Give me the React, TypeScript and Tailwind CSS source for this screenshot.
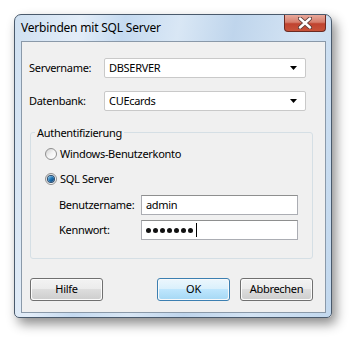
import React from 'react';

const font = { fontFamily: '"Noto Sans", "Open Sans", Arial, sans-serif' };

const ComboBox: React.FC<{ value: string }> = ({ value }) => (
  <div className="w-[202px] h-[20px] shrink-0 flex items-center justify-between bg-white border border-[#c9c9c9] rounded-[2px] pl-[4px] pr-[7px] text-black">
    <span>{value}</span>
    <svg width="8" height="5" viewBox="0 0 8 5">
      <path d="M0 0 L7 0 L3.5 4 Z" fill="#000" />
    </svg>
  </div>
);

const TextBox: React.FC<{ children: React.ReactNode }> = ({ children }) => (
  <div className="w-[157px] h-[20px] shrink-0 flex items-center bg-white border border-[#abadb3] border-t-[#8e8f8f] pl-[4px] text-black">
    {children}
  </div>
);

const Radio: React.FC<{ checked?: boolean; label: string }> = ({ checked, label }) => (
  <div className="h-[20px] flex items-center gap-[2px]">
    <div className="w-[12px] h-[12px] shrink-0 rounded-full border border-[#8f8f8f] bg-gradient-to-br from-[#d0d0d0] via-[#f4f4f4] to-[#ffffff] flex items-center justify-center">
      {checked && (
        <div className="w-[6px] h-[6px] rounded-full bg-gradient-to-br from-[#8fd3f5] via-[#1f74b4] to-[#0c3f72] ring-1 ring-[#2b4c6e]" />
      )}
    </div>
    <span className="ml-[1px]">{label}</span>
  </div>
);

const Button: React.FC<{ label: string; primary?: boolean }> = ({ label, primary }) => (
  <div
    className={
      primary
        ? 'w-[73px] h-[23px] rounded-[3px] border border-[#3c7fb1] p-[1px] bg-white/60'
        : 'w-[73px] h-[23px] rounded-[3px] border border-[#707070] p-[1px] bg-white/70'
    }
  >
    <div
      className={
        primary
          ? 'w-full h-full rounded-[2px] flex items-center justify-center text-black bg-[linear-gradient(#eaf6fd_0%,#d9f0fc_50%,#bee6fd_50%,#a7d9f5_100%)]'
          : 'w-full h-full rounded-[2px] flex items-center justify-center text-black bg-[linear-gradient(#f2f2f2_0%,#ebebeb_50%,#dddddd_50%,#cfcfcf_100%)]'
      }
    >
      {label}
    </div>
  </div>
);

export default function App() {
  return (
    <div className="w-[351px] h-[338px] bg-white pl-[14px] pt-[14px]" style={font}>
      <div className="w-[318px] h-[304px] rounded-t-[7px] rounded-b-[5px] border border-[#4a5a6c] shadow-[4px_6px_12px_rgba(0,0,0,0.45)] bg-[linear-gradient(100deg,#cfe0f1_0%,#e3edf8_18%,#c5daf0_30%,#d9e7f5_45%,#bfd5ec_60%,#d3e3f3_78%,#c2d8ee_100%)] flex flex-col">
        <div className="h-[26px] flex items-start justify-between">
          <span className="pl-[6px] pt-[4px] text-[12px] tracking-[-0.2px] text-black">Verbinden mit SQL Server</span>
          <div className="mr-[5px] w-[42px] h-[17px] rounded-b-[4px] border border-t-0 border-[#6b2a22] bg-[linear-gradient(#e9a99b_0%,#d67e6c_45%,#c0432f_55%,#c7533a_100%)] flex items-center justify-center">
            <svg width="14" height="12" viewBox="0 0 14 12">
              <path d="M2 1.5 L12 10.5 M12 1.5 L2 10.5" stroke="#5a3a36" strokeWidth="4.2" strokeLinecap="round" />
              <path d="M2 1.5 L12 10.5 M12 1.5 L2 10.5" stroke="#ffffff" strokeWidth="2.4" strokeLinecap="round" />
            </svg>
          </div>
        </div>
        <div className="ml-[6px] w-[305px] h-[272px] border border-[#8a99a9] bg-[#f0f0f0] flex flex-col text-[11px] tracking-[-0.3px] text-black">
          <div className="mt-[16px] pl-[7px] flex items-center">
            <span className="w-[75px] shrink-0">Servername:</span>
            <ComboBox value="DBSERVER" />
          </div>
          <div className="mt-[13px] pl-[7px] flex items-center">
            <span className="w-[75px] shrink-0">Datenbank:</span>
            <ComboBox value="CUEcards" />
          </div>
          <fieldset className="mt-[14px] ml-[8px] w-[283px] h-[134px] border border-[#d5dfe5] rounded-[3px] pl-[14px]">
            <legend className="ml-[-10px] px-[2px] leading-[15px]">Authentifizierung</legend>
            <div className="mt-[4px] flex flex-col gap-[5px]">
              <Radio label="Windows-Benutzerkonto" />
              <Radio checked label="SQL Server" />
            </div>
            <div className="mt-[6px] pl-[14px] flex flex-col gap-[5px]">
              <div className="flex items-center">
                <span className="w-[82px] shrink-0">Benutzername:</span>
                <TextBox>admin</TextBox>
              </div>
              <div className="flex items-center">
                <span className="w-[82px] shrink-0">Kennwort:</span>
                <TextBox>
                  <span className="flex items-center gap-[2px]">
                    {[0, 1, 2, 3, 4, 5, 6].map((i) => (
                      <span key={i} className="w-[5px] h-[5px] rounded-full bg-[#111]" />
                    ))}
                    <span className="w-[1px] h-[14px] bg-black ml-[1px]" />
                  </span>
                </TextBox>
              </div>
            </div>
          </fieldset>
          <div className="mt-[19px] pl-[8px] flex items-center">
            <Button label="Hilfe" />
            <div className="ml-[54px]">
              <Button label="OK" primary />
            </div>
            <div className="ml-[10px]">
              <Button label="Abbrechen" />
            </div>
          </div>
        </div>
      </div>
    </div>
  );
}
